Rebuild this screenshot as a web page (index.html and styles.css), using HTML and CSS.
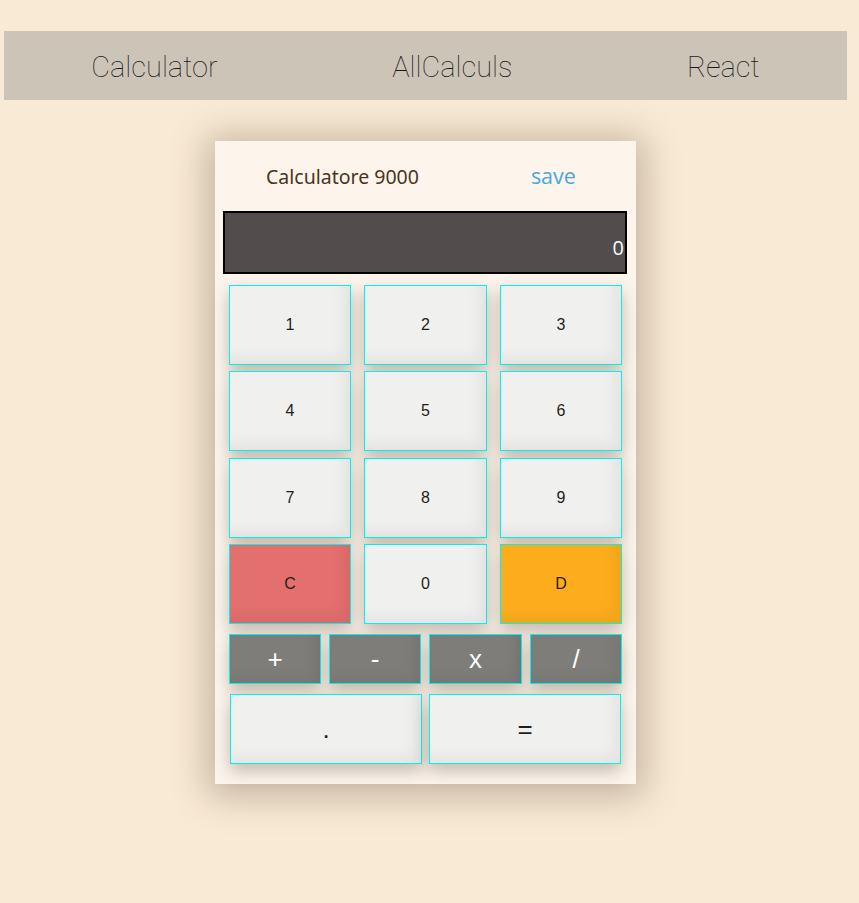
FILE: index.html
```html
<!DOCTYPE html>
<html lang="en">
<head>
<meta charset="utf-8">
<title>Calculator</title>
<link rel="stylesheet" href="styles.css">
</head>
<body>
<nav class="nav">
  <a class="nav-item">Calculator</a>
  <a class="nav-item">AllCalculs</a>
  <a class="nav-item">React</a>
</nav>
<main class="page">
  <section class="card">
    <header class="card-head">
      <span class="title">Calculatore 9000</span>
      <span class="save">save</span>
    </header>
    <div class="display"><span class="display-value">0</span></div>
    <div class="keys">
      <button class="key">1</button>
      <button class="key">2</button>
      <button class="key">3</button>
      <button class="key">4</button>
      <button class="key">5</button>
      <button class="key">6</button>
      <button class="key">7</button>
      <button class="key">8</button>
      <button class="key">9</button>
      <button class="key key-clear">C</button>
      <button class="key">0</button>
      <button class="key key-del">D</button>
    </div>
    <div class="ops">
      <button class="key key-op">+</button>
      <button class="key key-op">-</button>
      <button class="key key-op">x</button>
      <button class="key key-op">/</button>
    </div>
    <div class="bottom">
      <button class="key key-big">.</button>
      <button class="key key-big">=</button>
    </div>
  </section>
</main>
</body>
</html>
```
FILE: styles.css
```css
html, body {
  margin: 0;
  padding: 0;
  background: #f9ead6;
  height: 100%;
}
body {
  font-family: "Liberation Sans", Arial, sans-serif;
}
.nav {
  margin: 31px 12px 0 4px;
  height: 69px;
  background: #cdc4b8;
  display: flex;
  justify-content: space-around;
  align-items: center;
}
.nav-item {
  font-family: Roboto, sans-serif;
  font-weight: 100;
  font-size: 29px;
  color: #1a1918;
  text-decoration: none;
  line-height: 1;
  margin-top: 4px;
}
.page {
  margin: 41px 12px 0 4px;
  display: flex;
  justify-content: center;
}
.card {
  width: 421px;
  box-sizing: border-box;
  background: #fdf5ec;
  box-shadow: 0 4px 34px 8px rgba(80, 62, 42, 0.32);
  padding: 0 9px 20px 8px;
}
.card-head {
  height: 70px;
  display: flex;
  justify-content: flex-start;
  align-items: center;
  padding-left: 43px;
  gap: 112px;
}
.title {
  font-family: "Noto Sans", sans-serif;
  font-size: 19.5px;
  color: #4a3420;
  margin-top: 1px;
}
.save {
  font-family: "Open Sans", sans-serif;
  font-size: 21.5px;
  color: #4aa8d8;
  margin-top: -2px;
}
.display {
  height: 63px;
  box-sizing: border-box;
  background: #524c4c;
  border: 2px solid #000;
  display: flex;
  justify-content: flex-end;
  align-items: flex-end;
  padding: 0 1px 14px 0;
}
.display-value {
  font-family: "Open Sans", sans-serif;
  font-size: 20px;
  line-height: 1;
  color: #fff;
}
.key {
  margin: 0;
  padding: 0;
  border: 1px solid #00f2f2;
  background: #f0f0ee;
  color: #1e1e1e;
  font-family: "Liberation Sans", Arial, sans-serif;
  font-size: 16px;
  box-shadow: 0 7px 16px rgba(60, 45, 30, 0.3), inset -7px -7px 14px rgba(0, 0, 0, 0.05);
  cursor: pointer;
}
.keys {
  margin: 11px 5px 0 6px;
  display: grid;
  grid-template-columns: 122px 123px 122px;
  column-gap: 13px;
  grid-auto-rows: 80px;
  row-gap: 6.4px;
}
.key-clear {
  background: #e36f6e;
}
.key-del {
  background: #fdad1c;
}
.ops {
  margin: 10px 5px 0 6px;
  display: grid;
  grid-template-columns: 92px 92px 93px 92px;
  column-gap: 8px;
  height: 50px;
}
.key-op {
  background: #7e7d7a;
  color: #fff;
  font-size: 26px;
}
.bottom {
  margin: 10px 6px 0 7px;
  display: grid;
  grid-template-columns: 192px 192px;
  column-gap: 7px;
  height: 70px;
}
.key-big {
  font-size: 26px;
}
```
